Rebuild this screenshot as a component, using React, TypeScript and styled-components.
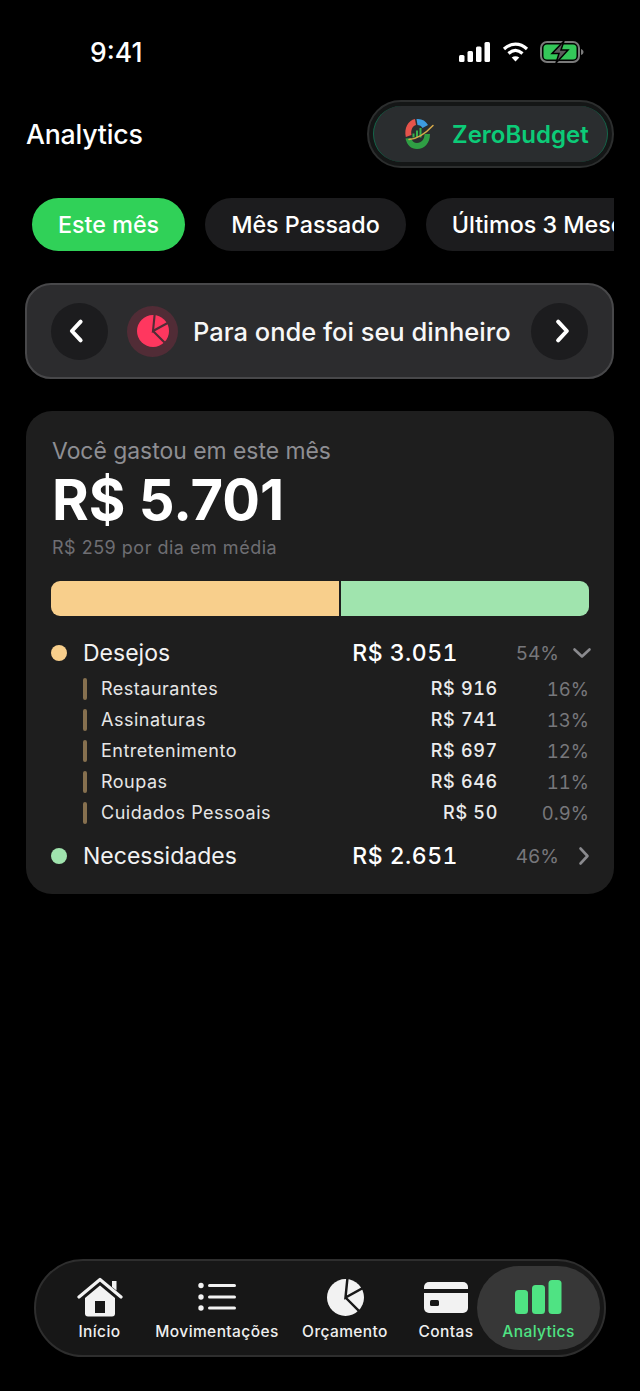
import React from 'react';
import styled, { createGlobalStyle } from 'styled-components';

const GlobalStyle = createGlobalStyle`
  html, body {
    margin: 0;
    padding: 0;
    background: #000;
    font-family: Inter, "Noto Sans", sans-serif;
    color: #fff;
  }
  * { box-sizing: border-box; }
`;

const Screen = styled.div`
  width: 640px;
  height: 1391px;
  background: #000;
  display: flex;
  flex-direction: column;
  overflow: hidden;
`;

const StatusBar = styled.div`
  height: 100px;
  padding: 36px 56px 0 90px;
  display: flex;
  justify-content: space-between;
  align-items: flex-start;
`;

const Clock = styled.div`
  font-size: 26.5px;
  line-height: 32px;
  font-weight: 500;
`;

const StatusIcons = styled.div`
  display: flex;
  align-items: center;
  gap: 11px;
  height: 32px;
`;

const Header = styled.div`
  height: 68px;
  padding: 0 26px 0 26px;
  display: flex;
  align-items: center;
  justify-content: space-between;
`;

const PageTitle = styled.div`
  font-size: 26.7px;
  font-weight: 500;
  letter-spacing: -0.2px;
`;

const BrandPill = styled.div`
  width: 247px;
  height: 68px;
  border-radius: 34px;
  background: #141616;
  border: 2px solid #2c2e2e;
  padding: 4px;
  display: flex;
`;

const BrandInner = styled.div`
  flex: 1;
  border-radius: 30px;
  background: #2a2d2f;
  border-left: 1.5px solid #14664a;
  border-right: 1.5px solid #14664a;
  display: flex;
  align-items: center;
  padding-left: 28px;
  gap: 16px;
`;

const BrandName = styled.div`
  color: #0ccb78;
  font-size: 24px;
  font-weight: 600;
`;

const Chips = styled.div`
  margin: 30px 26px 0;
  padding-left: 6px;
  display: flex;
  gap: 20px;
  overflow: hidden;
`;

const Chip = styled.div<{ $active?: boolean }>`
  flex: none;
  height: 53px;
  padding: 0 26px;
  border-radius: 27px;
  display: flex;
  align-items: center;
  font-size: 23.3px;
  font-weight: 500;
  color: #fff;
  background: ${p => (p.$active ? '#30d158' : '#1c1c1e')};
`;

const SectionNav = styled.div`
  margin: 32px 26px 0 25px;
  height: 96px;
  border-radius: 26px;
  background: #2c2c2e;
  border: 2px solid #48484a;
  padding: 0 24px;
  display: flex;
  align-items: center;
`;

const RoundButton = styled.div`
  flex: none;
  width: 57px;
  height: 57px;
  border-radius: 50%;
  background: #1c1c1e;
  display: flex;
  align-items: center;
  justify-content: center;
`;

const SectionBadge = styled.div`
  flex: none;
  width: 51px;
  height: 51px;
  margin-left: 19px;
  border-radius: 50%;
  background: #512c36;
  display: flex;
  align-items: center;
  justify-content: center;
`;

const SectionTitle = styled.div`
  flex: 1;
  margin-left: 15px;
  font-size: 25.5px;
  font-weight: 500;
  white-space: nowrap;
  color: #f7f7f7;
`;

const Card = styled.div`
  margin: 32px 26px 0;
  height: 483px;
  border-radius: 26px;
  background: #1e1e1e;
  padding: 26px 25px 0 25px;
`;

const SpentLabel = styled.div`
  font-size: 22.9px;
  line-height: 28px;
  color: #8e8e93;
  margin-left: 1px;
`;

const SpentValue = styled.div`
  font-size: 56px;
  line-height: 64px;
  font-weight: 700;
  margin: 3px 0 0 1px;
`;

const SpentAverage = styled.div`
  font-size: 18px;
  line-height: 24px;
  color: #6e6e73;
  letter-spacing: 0.5px;
  margin: 4px 0 0 1px;
`;

const SplitBar = styled.div`
  margin-top: 21px;
  height: 35px;
  border-radius: 9px;
  overflow: hidden;
  display: flex;
  gap: 2px;
`;

const SplitPart = styled.div<{ $color: string; $grow: number }>`
  flex: ${p => p.$grow} 0 0;
  background: ${p => p.$color};
`;

const GroupRow = styled.div<{ $top: number }>`
  display: grid;
  grid-template-columns: 16px 1fr 130px 100px 32px;
  align-items: center;
  height: 32px;
  margin-top: ${p => p.$top}px;
  font-size: 23px;
`;

const Dot = styled.div<{ $color: string }>`
  width: 16px;
  height: 16px;
  border-radius: 50%;
  background: ${p => p.$color};
`;

const GroupName = styled.div`
  margin-left: 16px;
  color: #f2f2f2;
`;

const GroupAmount = styled.div`
  text-align: right;
  font-weight: 500;
  letter-spacing: 0.5px;
  font-variant-numeric: tabular-nums;
  margin-right: -1px;
`;

const GroupPercent = styled.div`
  text-align: right;
  font-size: 19px;
  color: #77777b;
  font-variant-numeric: tabular-nums;
  margin-right: -2px;
`;

const GroupCaret = styled.div`
  display: flex;
  justify-content: flex-end;
  margin-right: -5px;
`;

const SubList = styled.div`
  margin-top: 4px;
  padding-left: 32px;
  display: flex;
  flex-direction: column;
`;

const SubRow = styled.div`
  display: grid;
  grid-template-columns: 4px 1fr 110px 92px;
  align-items: center;
  height: 31px;
  font-size: 18px;
`;

const SubMark = styled.div`
  width: 4px;
  height: 22px;
  border-radius: 2px;
  background: #86704f;
`;

const SubName = styled.div`
  margin-left: 14px;
  color: #e6e6e6;
  letter-spacing: 0.5px;
`;

const SubAmount = styled.div`
  text-align: right;
  font-weight: 500;
  color: #ececec;
  letter-spacing: 0.7px;
  font-variant-numeric: tabular-nums;
  margin-right: -1px;
`;

const SubPercent = styled.div`
  text-align: right;
  color: #77777b;
  font-size: 18.5px;
  font-variant-numeric: tabular-nums;
`;

const TabBar = styled.div`
  margin: auto 34px 34px;
  height: 98px;
  border-radius: 49px;
  background: #171717;
  border: 2px solid #2e2e2e;
  display: flex;
  align-items: center;
`;

const Tab = styled.div<{ $width: number; $active?: boolean }>`
  flex: none;
  width: ${p => p.$width}px;
  height: 84px;
  margin-left: ${p => (p.$active ? 4 : 0)}px;
  border-radius: 42px;
  background: ${p => (p.$active ? '#373737' : 'transparent')};
  color: ${p => (p.$active ? '#4fe383' : '#efefef')};
  display: flex;
  flex-direction: column;
  align-items: center;
  justify-content: flex-end;
  padding-bottom: 8px;
`;

const TabIcon = styled.div`
  height: 44px;
  margin-bottom: 3px;
  display: flex;
  align-items: center;
  justify-content: center;
`;

const TabLabel = styled.div`
  font-size: 15.5px;
  line-height: 20px;
  font-weight: 500;
  letter-spacing: 0.4px;
  white-space: nowrap;
`;

const chevronPaths = {
  l: 'M12.5 4.5 5.5 12l7 7.5',
  r: 'M10.5 4.5l7 7.5-7 7.5',
  d: 'M4.500 8.500 12 15.500l7.500-7',
};

const Chevron = ({ dir, size, color, width }: { dir: 'l' | 'r' | 'd'; size: number; color: string; width: number }) => (
  <svg width={size} height={size} viewBox="0 0 24 24" fill="none">
    <path d={chevronPaths[dir]} stroke={color} strokeWidth={width} strokeLinecap="round" strokeLinejoin="round" />
  </svg>
);

const PieIcon = ({ size, color, cut }: { size: number; color: string; cut: string }) => (
  <svg width={size} height={size} viewBox="0 0 36 36">
    <circle cx="18" cy="18" r="18" fill={color} />
    <path d="M20 -2 18 18 38 7 M18 18 31 31" stroke={cut} strokeWidth="2.400" fill="none" />
  </svg>
);

const Logo = () => (
  <svg width="34" height="34" viewBox="0 0 34 34" fill="none">
    <path d="M3.800 20C2 11 6 3.500 13 2l1 6c-3.500 1-5.500 5-4.500 10Z" fill="#e5534b" />
    <path d="M14.500 2c5-.6 9 1.500 11.500 6l-5.500 3c-1-2-3-3-5-3Z" fill="#3d9be0" />
    <path d="M3.500 21.500C5 28 9 32 15 32c7.500 0 13-6 13-15l-5.500 0c0 5.500-3 9-7.500 9-3 0-5-2-6-5Z" fill="#2f9e44" />
    <path d="M10.500 20.500h2v-4h-2ZM14 20.500h2v-7h-2ZM17.500 20.500h2v-9.500h-2Z" fill="#37b24d" />
    <path d="M7 22.500C15 22 23 17 31 8.500" stroke="#d6a94a" strokeWidth="1.500" strokeLinecap="round" />
  </svg>
);

const categories = [
  { name: 'Restaurantes', amount: 'R$ 916', percent: '16%' },
  { name: 'Assinaturas', amount: 'R$ 741', percent: '13%' },
  { name: 'Entretenimento', amount: 'R$ 697', percent: '12%' },
  { name: 'Roupas', amount: 'R$ 646', percent: '11%' },
  { name: 'Cuidados Pessoais', amount: 'R$ 50', percent: '0.9%' },
];

const App: React.FC = () => (
  <Screen>
    <GlobalStyle />
    <StatusBar>
      <Clock>9:41</Clock>
      <StatusIcons>
        <svg width="32" height="20" viewBox="0 0 32 20" fill="#fff">
          <rect x="0" y="13" width="5.500" height="7" rx="1.500" />
          <rect x="8.500" y="9" width="5.500" height="11" rx="1.500" />
          <rect x="17" y="4.500" width="5.500" height="15.500" rx="1.500" />
          <rect x="25.500" y="0" width="5.500" height="20" rx="1.500" />
        </svg>
        <svg width="27" height="20" viewBox="0 0 27 20" fill="none" stroke="#fff" strokeWidth="3.200">
          <path d="M2 7C9 .5 18 .5 25 7" />
          <path d="M6.500 11.500c4.500-4 9.500-4 14 0" />
          <path d="M13.500 19.500l-3.800-4c2.300-1.700 5.300-1.700 7.600 0Z" fill="#fff" stroke="none" />
        </svg>
        <svg width="44" height="22" viewBox="0 0 44 22" fill="none">
          <rect x="1" y="1" width="38" height="20" rx="6" stroke="#7a7a7a" strokeWidth="2" />
          <rect x="3.500" y="3.500" width="33" height="15" rx="3.500" fill="#34c759" />
          <path d="M41 8v6c1.500-.5 2.500-1.500 2.500-3S42.500 8.500 41 8Z" fill="#7a7a7a" />
          <path d="M24 0 12 12.500h7L16 22l12-13h-7Z" fill="#5c5c5c" stroke="#000" strokeWidth="1.500" />
        </svg>
      </StatusIcons>
    </StatusBar>

    <Header>
      <PageTitle>Analytics</PageTitle>
      <BrandPill>
        <BrandInner>
          <Logo />
          <BrandName>ZeroBudget</BrandName>
        </BrandInner>
      </BrandPill>
    </Header>

    <Chips>
      <Chip $active>Este mês</Chip>
      <Chip>Mês Passado</Chip>
      <Chip>Últimos 3 Meses</Chip>
    </Chips>

    <SectionNav>
      <RoundButton>
        <Chevron dir="l" size={30} color="#fff" width={3.2} />
      </RoundButton>
      <SectionBadge>
        <PieIcon size={32} color="#ff375f" cut="#512c36" />
      </SectionBadge>
      <SectionTitle>Para onde foi seu dinheiro</SectionTitle>
      <RoundButton>
        <Chevron dir="r" size={30} color="#fff" width={3.2} />
      </RoundButton>
    </SectionNav>

    <Card>
      <SpentLabel>Você gastou em este mês</SpentLabel>
      <SpentValue>R$ 5.701</SpentValue>
      <SpentAverage>R$ 259 por dia em média</SpentAverage>
      <SplitBar>
        <SplitPart $color="#f8cf8c" $grow={288} />
        <SplitPart $color="#a0e4ae" $grow={248} />
      </SplitBar>

      <GroupRow $top={21}>
        <Dot $color="#f8cf8c" />
        <GroupName>Desejos</GroupName>
        <GroupAmount>R$ 3.051</GroupAmount>
        <GroupPercent>54%</GroupPercent>
        <GroupCaret>
          <Chevron dir="d" size={24} color="#8a8a8e" width={2.6} />
        </GroupCaret>
      </GroupRow>
      <SubList>
        {categories.map(c => (
          <SubRow key={c.name}>
            <SubMark />
            <SubName>{c.name}</SubName>
            <SubAmount>{c.amount}</SubAmount>
            <SubPercent>{c.percent}</SubPercent>
          </SubRow>
        ))}
      </SubList>
      <GroupRow $top={12}>
        <Dot $color="#a0e4ae" />
        <GroupName>Necessidades</GroupName>
        <GroupAmount>R$ 2.651</GroupAmount>
        <GroupPercent>46%</GroupPercent>
        <GroupCaret>
          <Chevron dir="r" size={24} color="#8a8a8e" width={2.6} />
        </GroupCaret>
      </GroupRow>
    </Card>

    <TabBar>
      <Tab $width={127}>
        <TabIcon>
          <svg width="46" height="40" viewBox="0 0 46 40">
            <path d="M2 20 23 2.500 44 20" fill="none" stroke="#f2f2f2" strokeWidth="3.200" strokeLinecap="round" strokeLinejoin="round" />
            <path d="M35 4h4.500v9.500L35 10Z" fill="#f2f2f2" />
            <path d="M8 21 23 8.500 38 21v15.500a3 3 0 0 1-3 3H11a3 3 0 0 1-3-3Z" fill="#f2f2f2" />
            <rect x="18" y="24" width="10" height="12" fill="#171717" />
          </svg>
        </TabIcon>
        <TabLabel>Início</TabLabel>
      </Tab>
      <Tab $width={108}>
        <TabIcon>
          <svg width="38" height="30" viewBox="0 0 38 30" fill="#f2f2f2">
            <circle cx="3" cy="3.500" r="2.700" />
            <circle cx="3" cy="15" r="2.700" />
            <circle cx="3" cy="26" r="2.700" />
            <rect x="10" y="2" width="28" height="3" rx="1.500" />
            <rect x="10" y="13.500" width="28" height="3" rx="1.500" />
            <rect x="10" y="24.500" width="28" height="3" rx="1.500" />
          </svg>
        </TabIcon>
        <TabLabel>Movimentações</TabLabel>
      </Tab>
      <Tab $width={148}>
        <TabIcon>
          <PieIcon size={37} color="#f2f2f2" cut="#171717" />
        </TabIcon>
        <TabLabel>Orçamento</TabLabel>
      </Tab>
      <Tab $width={54}>
        <TabIcon>
          <svg width="44" height="32" viewBox="0 0 44 32">
            <path d="M0 6a5 5 0 0 1 5-5h34a5 5 0 0 1 5 5v2H0Z" fill="#f2f2f2" />
            <path d="M0 12h44v15a5 5 0 0 1-5 5H5a5 5 0 0 1-5-5Z" fill="#f2f2f2" />
            <rect x="6" y="19" width="9" height="6" rx="1.500" fill="#171717" />
          </svg>
        </TabIcon>
        <TabLabel>Contas</TabLabel>
      </Tab>
      <Tab $width={123} $active>
        <TabIcon>
          <svg width="47" height="34" viewBox="0 0 47 34" fill="#4fe383">
            <rect x="0" y="10" width="13" height="24" rx="3.500" />
            <rect x="17" y="5" width="13" height="29" rx="3.500" />
            <rect x="33.500" y="0" width="13" height="34" rx="3.500" />
          </svg>
        </TabIcon>
        <TabLabel>Analytics</TabLabel>
      </Tab>
    </TabBar>
  </Screen>
);

export default App;
